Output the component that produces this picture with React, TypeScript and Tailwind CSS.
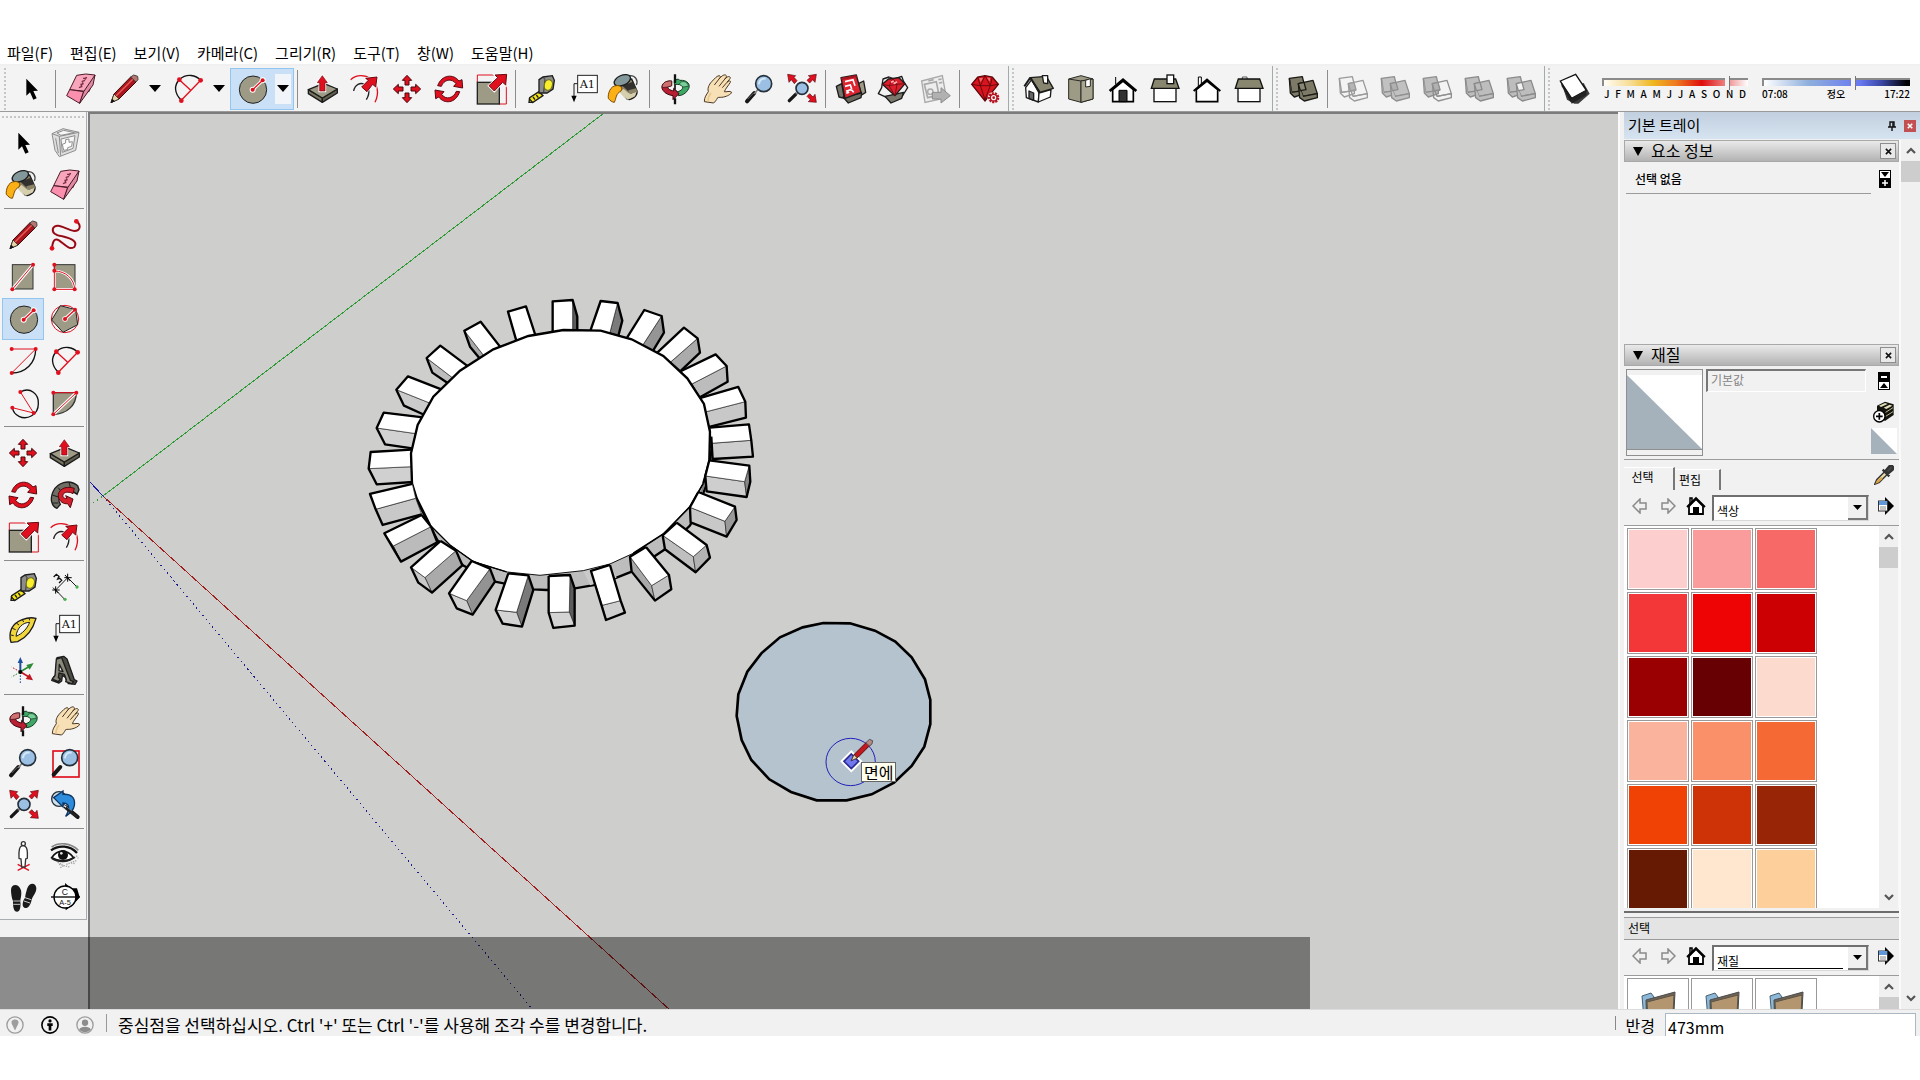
import type { ReactNode } from "react";

const RED = "#e0101f";
const OLIVE = "#9d9b86";
const INK = "#1c1c1c";

function Svg({ children, className = "size-8" }: { children: ReactNode; className?: string }) {
  return (
    <svg viewBox="0 0 96 96" className={`${className} shrink-0 overflow-visible`} fill="none" aria-hidden="true">
      {children}
    </svg>
  );
}

function Dots({ at, r = 6 }: { at: [number, number][]; r?: number }) {
  return (
    <>
      {at.map(([x, y]) => (
        <circle key={`${x}-${y}`} cx={x} cy={y} r={r} fill={RED} />
      ))}
    </>
  );
}

/* ---------- drawing tools ---------- */

const SelectIcon = () => (
  <Svg>
    <path d="M34 17V68L45 58L55 80L65 76L55 54L69 53Z" fill="#000" />
  </Svg>
);

const ComponentIcon = () => (
  <Svg>
    <g stroke="#8d8d8d" strokeWidth="3" strokeLinejoin="round">
      <path d="M9 20L42 5L90 16L80 70L31 89L18 70Z" fill="#dedede" />
      <path d="M9 20L31 28L35 86M31 28L90 16M20 34L28 78" fill="none" />
      <path d="M36 36L78 26L72 64L40 76Z" fill="#f6f6f6" />
      <path d="M40 52L50 48V38L60 36V46L70 44L68 58L56 62V68L44 70Z" fill="#fff" />
      <path d="M24 18L44 10L76 17L36 25Z" fill="#f7f7f7" />
    </g>
  </Svg>
);

const PaintIcon = () => (
  <Svg>
    <path d="M60 8C80 6 88 22 82 36" stroke="#444" strokeWidth="4" />
    <path d="M18 28L54 78C68 84 86 68 84 54L68 18Z" fill="#8b8268" stroke={INK} strokeWidth="4" />
    <path d="M40 66L84 52L78 70L56 80Z" fill="#d6cfae" />
    <path d="M40 38L72 26L84 54L66 62Z" fill="#33312d" />
    <path d="M58 52L82 46L84 56L62 64Z" fill="#8b8268" />
    <path d="M30 56L44 48L58 60L48 76Z" fill="#d6cfae" />
    <ellipse cx="40" cy="22" rx="26" ry="15" transform="rotate(-24 40 22)" fill="#83989b" stroke={INK} strokeWidth="4" />
    <path d="M22 38C4 38-4 62-2 76C2 82 10 88 16 88C22 76 20 62 36 54C42 44 34 36 22 38Z" fill="#fbb116" stroke="#7a4b00" strokeWidth="3" />
  </Svg>
);

const EraserIcon = () => (
  <Svg>
    <g stroke="#4a1a28" strokeWidth="3" strokeLinejoin="round">
      <path d="M35 7L62 3L90 6L72 56L14 50Z" fill="#f7a6bb" />
      <path d="M14 50L56 56L44 91L5 68Z" fill="#fb8fae" />
      <path d="M90 6L84 36L44 91L56 56Z" fill="#e08aa3" />
    </g>
    <path d="M42 44L52 40M46 34L56 32M50 26L60 22M54 16L66 14M48 40L54 28M60 20L64 12" stroke="#7d3048" strokeWidth="4" />
  </Svg>
);

const PencilIcon = () => (
  <Svg>
    <path d="M9 89L18 63L68 12L84 27L33 78Z" fill="#a8151d" stroke="#3a0a0c" strokeWidth="3" />
    <path d="M24 69L75 18" stroke="#ea5a58" strokeWidth="4" />
    <path d="M9 89L18 63L33 78Z" fill="#e4d5a8" stroke={INK} strokeWidth="2" />
    <path d="M8 90L12 77L21 85Z" fill="#111" />
    <path d="M68 12L77 6L89 10L90 20L84 27Z" fill="#b77770" stroke="#444" strokeWidth="3" />
  </Svg>
);

const FreehandIcon = () => (
  <Svg>
    <path d="M9 87C12 60 20 58 30 64C50 78 60 94 76 84C88 66 64 58 40 52C20 50 8 42 12 28C24 8 50 32 76 36C94 36 98 18 82 7" stroke="#b5121f" strokeWidth="6" />
    <path d="M9 87C12 60 20 58 30 64C50 78 60 94 76 84C88 66 64 58 40 52C20 50 8 42 12 28C24 8 50 32 76 36C94 36 98 18 82 7" stroke="#5a0a10" strokeWidth="2" />
    <Dots at={[[9, 88], [82, 7]]} r={7} />
  </Svg>
);

const RectIcon = () => (
  <Svg>
    <rect x="16" y="11" width="62" height="73" fill={OLIVE} stroke="#333" strokeWidth="3" />
    <path d="M16 85L78 11" stroke="#fff" strokeWidth="9" />
    <path d="M16 85L78 11" stroke={RED} strokeWidth="3" />
    <Dots at={[[16, 85], [78, 11]]} />
  </Svg>
);

const RotatedRectIcon = () => (
  <Svg>
    <rect x="16" y="11" width="62" height="73" fill={OLIVE} stroke="#333" strokeWidth="3" />
    <path d="M16 30C50 30 76 54 77 85H16Z" stroke="#fff" strokeWidth="8" />
    <path d="M16 11V85H77C76 54 50 30 16 30" stroke={RED} strokeWidth="3" />
    <Dots at={[[16, 11], [16, 29], [16, 85], [77, 85]]} />
  </Svg>
);

const CircleIcon = () => (
  <Svg>
    <circle cx="51" cy="50" r="41" fill={OLIVE} stroke="#222" strokeWidth="3" />
    <path d="M50 50L80 22" stroke="#fff" strokeWidth="10" />
    <circle cx="80" cy="22" r="9" fill="#fff" />
    <circle cx="50" cy="50" r="9" fill="#fff" />
    <path d="M50 50L80 22" stroke={RED} strokeWidth="4" />
    <Dots at={[[50, 50], [80, 22]]} />
  </Svg>
);

const PolygonIcon = () => (
  <Svg>
    <circle cx="48" cy="48" r="41" stroke={RED} strokeWidth="3" />
    <path d="M34 8L80 20L86 65L42 88L8 51Z" fill={OLIVE} stroke="#222" strokeWidth="3" />
    <path d="M48 48L78 20" stroke="#fff" strokeWidth="10" />
    <circle cx="48" cy="48" r="8" fill="#fff" />
    <path d="M48 48L78 20" stroke={RED} strokeWidth="4" />
    <Dots at={[[48, 48], [78, 20]]} />
  </Svg>
);

const ArcCenterIcon = () => (
  <Svg>
    <path d="M86 12C86 54 56 84 14 84" stroke="#111" strokeWidth="4" />
    <path d="M14 12H86L14 84" stroke={RED} strokeWidth="3" />
    <Dots at={[[14, 12], [86, 12], [14, 84]]} />
  </Svg>
);

const ArcTwoPointIcon = () => (
  <Svg>
    <path d="M28 82C6 60 6 36 22 20C44 0 72 6 86 22" stroke="#111" strokeWidth="4" />
    <path d="M28 82L86 22M22 20L56 52" stroke={RED} strokeWidth="4" />
    <Dots at={[[28, 83], [86, 22], [22, 20]]} r={7} />
  </Svg>
);

const ArcThreePointIcon = () => (
  <Svg>
    <path d="M40 15C70 -2 96 22 94 50C94 84 60 100 36 88C22 82 18 72 16 62" stroke="#111" strokeWidth="4" />
    <path d="M40 15L80 78L16 62" stroke={RED} strokeWidth="3" />
    <Dots at={[[40, 15], [80, 78], [16, 62]]} />
  </Svg>
);

const PieIcon = () => (
  <Svg>
    <path d="M13 17H82C82 56 52 82 13 82Z" fill={OLIVE} stroke="#333" strokeWidth="4" />
    <path d="M13 82L82 17" stroke="#fff" strokeWidth="9" />
    <path d="M13 17H82L13 82" stroke={RED} strokeWidth="3" />
    <Dots at={[[13, 17], [82, 17], [13, 82]]} />
  </Svg>
);

/* ---------- modify tools ---------- */

const MoveIcon = () => (
  <Svg>
    <path
      d="M48 7L62 22H54V36H42V22H34ZM48 89L34 74H42V60H54V74H62ZM7 48L22 34V42H36V54H22V62ZM89 48L74 62V54H60V42H74V34Z"
      fill={RED}
      stroke="#4d070c"
      strokeWidth="3"
    />
  </Svg>
);

const PushPullIcon = () => (
  <Svg>
    <g stroke={INK} strokeWidth="4" strokeLinejoin="round">
      <path d="M4 50V62L46 88V75Z" fill="#77755f" />
      <path d="M91 48V60L46 88V75Z" fill="#5f5d4c" />
      <path d="M4 50L50 31L91 48L46 75Z" fill={OLIVE} />
    </g>
    <path d="M46 8L61 29H54V54H38V29H31Z" fill={RED} stroke="#fff" strokeWidth="7" />
    <path d="M46 8L61 29H54V54H38V29H31Z" fill={RED} stroke="#7a0a10" strokeWidth="2" />
  </Svg>
);

const RotateIcon = () => (
  <Svg>
    <g fill={RED} stroke="#5a0810" strokeWidth="3" strokeLinejoin="round">
      <path d="M14 38C26 4 62 2 78 24L87 20L89 45L62 40L69 32C56 14 32 20 25 40Z" />
      <path d="M80 56C68 92 34 94 17 72L8 77L6 51L33 56L26 64C38 82 62 76 70 55Z" />
    </g>
  </Svg>
);

const FollowMeIcon = () => (
  <Svg>
    <path d="M86 20C60 -2 24 12 12 38C2 60 8 82 24 88L34 76C26 64 28 48 42 40C56 32 72 36 84 46L90 32Z" fill="#6f6f66" stroke={INK} strokeWidth="4" />
    <path d="M28 26L38 40M60 10L66 32M10 48L28 54M12 72L28 72" stroke={INK} strokeWidth="3" />
    <path d="M76 28C48 18 24 34 28 54C32 68 44 76 56 74L64 86L72 60L50 50L54 58C44 60 38 52 44 44C50 38 62 38 72 44Z" fill="#d3202c" stroke="#5a0810" strokeWidth="3" />
  </Svg>
);

const ScaleIcon = () => (
  <Svg>
    <path d="M7 28V6H94V93H72" stroke={RED} strokeWidth="3" />
    <rect x="7" y="28" width="66" height="65" fill={OLIVE} stroke="#222" strokeWidth="4" />
    <path d="M95 4L92 36L83 28L58 54L42 38L68 14L60 6Z" fill={RED} stroke="#fff" strokeWidth="7" />
    <path d="M95 4L92 36L83 28L58 54L42 38L68 14L60 6Z" fill={RED} stroke="#6a0910" strokeWidth="3" />
  </Svg>
);

const OffsetIcon = () => (
  <Svg>
    <path d="M5 20C40 -12 108 24 78 88" stroke={RED} strokeWidth="4" />
    <path d="M14 54C22 12 80 34 52 80" stroke="#222" strokeWidth="4" />
    <path d="M84 12L80 42L71 34L54 56L38 42L58 22L50 16Z" fill={RED} stroke="#fff" strokeWidth="6" />
    <path d="M84 12L80 42L71 34L54 56L38 42L58 22L50 16Z" fill={RED} stroke="#6a0910" strokeWidth="3" />
  </Svg>
);

/* ---------- measuring tools ---------- */

const TapeIcon = () => (
  <Svg>
    <path d="M42 56L14 74L12 88L24 88L54 68Z" fill="#f5e51b" stroke={INK} strokeWidth="4" />
    <path d="M12 76L24 90M24 72L30 80M34 66L40 74" stroke={INK} strokeWidth="4" />
    <path d="M42 20L54 12L82 8L88 22L84 48L66 60L42 60Z" fill="#8c8c8a" stroke={INK} strokeWidth="4" />
    <path d="M54 12L60 20L56 58" stroke="#333" strokeWidth="3" />
    <ellipse cx="70" cy="36" rx="12" ry="16" transform="rotate(14 70 36)" fill="#f8f02c" stroke="#6f6b1b" strokeWidth="3" />
  </Svg>
);

const DimensionIcon = () => (
  <Svg>
    <path d="M20 57L56 20M20 57L46 84M56 20L84 48" stroke={INK} strokeWidth="3" />
    <path d="M12 50L28 66M20 46V68M10 57H32M48 12L64 30M56 8V32M46 20H68" stroke="#000" strokeWidth="3" />
    <path d="M14 18L22 10L30 16L26 24L32 22L38 28L30 36" stroke="#111" strokeWidth="4" />
    <circle cx="48" cy="85" r="5" fill="#4db154" />
    <circle cx="84" cy="48" r="5" fill="#4db154" />
  </Svg>
);

const ProtractorIcon = () => (
  <Svg>
    <path d="M87 16C62 10 26 22 14 46C8 60 8 76 12 88L32 86C58 74 78 48 87 16Z" fill="#f2d73c" stroke={INK} strokeWidth="4" strokeLinejoin="round" />
    <path d="M68 28C48 28 30 44 27 70C46 62 60 48 68 28Z" fill="#f3f3f3" stroke={INK} strokeWidth="3" />
    <path d="M12 66L20 68M16 46L26 50M28 30L36 36M46 20L50 27M66 15L68 22" stroke={INK} strokeWidth="3" />
  </Svg>
);

const TextIcon = () => (
  <Svg>
    <path d="M32 32H21V72" stroke={INK} strokeWidth="3" />
    <path d="M13 68H29L21 88Z" fill="#000" />
    <rect x="32" y="7" width="59" height="52" fill="#fff" stroke="#222" strokeWidth="3" />
    <text x="61" y="45" textAnchor="middle" fontFamily="DejaVu Serif, serif" fontSize="34" fill="#111">
      A1
    </text>
  </Svg>
);

const AxesIcon = () => (
  <Svg>
    <path d="M40 52V20" stroke="#1f4fa0" strokeWidth="6" />
    <path d="M32 24L40 6L48 24Z" fill="#1f4fa0" />
    <path d="M40 50L68 34" stroke="#2c8c37" strokeWidth="5" />
    <path d="M58 30L80 24L68 44Z" fill="#2c8c37" />
    <path d="M40 50L66 66" stroke="#c3151f" strokeWidth="5" />
    <path d="M68 56L78 76L56 72Z" fill="#c3151f" />
    <path d="M40 52V84" stroke="#1f4fa0" strokeWidth="3" strokeDasharray="5 4" />
    <path d="M38 52L14 66" stroke="#2c8c37" strokeWidth="3" strokeDasharray="5 4" />
    <path d="M38 50L14 36" stroke="#c3151f" strokeWidth="3" strokeDasharray="5 4" />
    <circle cx="40" cy="51" r="6" fill="#000" />
  </Svg>
);

const Text3dIcon = () => (
  <Svg>
    <g stroke={INK} strokeWidth="4" strokeLinejoin="round">
      <path d="M24 8L44 4L54 12L76 74L84 78L78 88L58 86L48 66L40 62L38 78L30 84L8 76L14 66L20 60Z" fill="#4e4d45" />
      <path d="M22 12L38 8L64 76L74 80L68 86L50 80L52 74L46 58L30 54L28 68L34 72L28 80L10 72L18 62Z" fill="#8b897a" />
      <path d="M31 28L42 50L30 47Z" fill="#f3f3f3" />
    </g>
  </Svg>
);

/* ---------- camera tools ---------- */

const OrbitIcon = () => (
  <Svg>
    <path d="M62 22C86 20 98 36 86 52C80 62 68 68 58 68L58 60L46 68V50L56 56C66 54 74 46 70 40C66 34 58 34 46 34V22L58 18Z" fill="#3fa765" stroke="#123d20" strokeWidth="3" />
    <path d="M62 34C60 24 86 20 88 40L72 42Z" fill="#79cf99" stroke="#123d20" strokeWidth="2" />
    <path d="M38 24C16 22 2 38 12 52C18 62 30 66 42 68V80L60 62L44 46V54C32 52 26 46 26 42L38 38Z" fill="#b81f33" stroke="#3d0810" strokeWidth="3" />
    <path d="M38 24C16 22 8 34 10 44L26 42L38 38Z" fill="#cd7170" stroke="#3d0810" strokeWidth="2" />
    <path d="M48 4V30M48 76V94" stroke="#111" strokeWidth="7" />
    <path d="M48 34V50" stroke="#111" strokeWidth="5" />
  </Svg>
);

const PanIcon = () => (
  <Svg>
    <path
      d="M10 86C10 72 16 66 22 56C18 42 28 30 34 24C42 16 46 10 54 8C60 8 58 14 54 18C62 8 72 2 76 8C78 12 72 16 70 20C78 10 86 8 88 14C88 18 82 22 78 28C84 22 90 22 88 28C82 38 74 46 70 56C76 58 86 52 92 58C90 64 78 70 68 72C60 74 54 72 50 74C46 82 42 86 38 90Z"
      fill="#f8e0b6"
      stroke="#4a3823"
      strokeWidth="3"
      strokeLinejoin="round"
    />
    <path d="M54 18L40 36M70 20L54 40M78 28L64 44" stroke="#4a3823" strokeWidth="3" />
    <path d="M30 60C24 68 20 78 22 86" stroke="#e7c78d" strokeWidth="5" />
  </Svg>
);

const ZoomIcon = () => (
  <Svg>
    <path d="M12 85L34 60" stroke="#161616" strokeWidth="12" strokeLinecap="round" />
    <path d="M14 78L32 60" stroke="#6d6d6d" strokeWidth="3" />
    <path d="M34 62L44 50" stroke="#888" strokeWidth="5" />
    <circle cx="62" cy="32" r="24" fill="#9cc0e4" stroke="#26303a" strokeWidth="5" />
    <path d="M48 34C48 20 58 16 68 17" stroke="#d4e7f7" strokeWidth="6" />
  </Svg>
);

const ZoomWindowIcon = () => (
  <Svg>
    <rect x="12" y="12" width="78" height="78" fill="#f3f3f3" stroke={RED} strokeWidth="5" />
    <path d="M14 83L34 60" stroke="#161616" strokeWidth="12" strokeLinecap="round" />
    <circle cx="62" cy="32" r="24" fill="#9cc0e4" stroke="#26303a" strokeWidth="5" />
    <path d="M48 34C48 20 58 16 68 17" stroke="#d4e7f7" strokeWidth="6" />
  </Svg>
);

const ZoomExtentsIcon = () => (
  <Svg>
    <g fill={RED} stroke="#5a0810" strokeWidth="2">
      <path d="M8 4L32 8L27 13L36 23L28 32L19 20L12 28Z" />
      <path d="M94 4L90 28L83 20L74 30L66 22L76 13L70 8Z" />
      <path d="M94 88L70 86L76 80L66 70L74 62L84 72L90 64Z" />
    </g>
    <path d="M13 83L32 64" stroke="#161616" strokeWidth="10" strokeLinecap="round" />
    <path d="M32 64L42 56" stroke="#777" strokeWidth="4" />
    <circle cx="51" cy="46" r="18" fill="#9cc0e4" stroke="#26303a" strokeWidth="5" />
  </Svg>
);

const PreviousIcon = () => (
  <Svg>
    <circle cx="30" cy="30" r="22" fill="#cfe0ee" stroke="#26303a" strokeWidth="4" />
    <path d="M50 54L86 84" stroke="#161616" strokeWidth="12" strokeLinecap="round" />
    <path d="M14 26L42 6V16C66 14 80 26 76 50C74 60 66 72 50 82C58 68 60 56 58 50C54 44 50 42 42 42V54Z" fill="#2e8cdc" stroke="#0d3763" strokeWidth="4" />
    <path d="M46 50L68 68" stroke="#fff" strokeWidth="4" />
    <path d="M50 56L84 84" stroke="#222" strokeWidth="8" />
  </Svg>
);

const PositionCameraIcon = () => (
  <Svg>
    <path d="M32 94L68 76M66 94L32 76" stroke={RED} strokeWidth="4" />
    <path d="M48 20C62 20 62 40 61 58L56 60L54 84H44L42 60L36 58C35 38 36 20 48 20Z" fill="#fff" stroke="#333" strokeWidth="4" />
    <circle cx="49" cy="14" r="6" fill="#fff" stroke="#333" strokeWidth="4" />
  </Svg>
);

const LookAroundIcon = () => (
  <Svg>
    <path d="M8 24C30 8 66 12 88 34" stroke="#888" strokeWidth="5" />
    <path d="M6 34C30 16 64 20 84 42" stroke="#111" strokeWidth="7" />
    <path d="M8 56C26 30 54 30 74 56C54 68 30 68 8 56Z" fill="#fff" stroke="#111" strokeWidth="5" />
    <circle cx="42" cy="48" r="15" fill="#0d0d0d" />
    <circle cx="37" cy="43" r="4" fill="#ddd" />
    <path d="M8 58C30 72 60 70 78 54" stroke="#222" strokeWidth="5" />
    <path d="M30 76L62 84M52 76L84 64M34 86L44 80M82 50L88 58M26 70L40 76M66 72L80 74" stroke="#a5a5a5" strokeWidth="4" strokeDasharray="4 3" />
  </Svg>
);

const WalkIcon = () => (
  <Svg>
    <g fill="#1a1a1a">
      <path d="M12 26C12 8 36 6 42 28C45 42 40 54 40 60L18 60C14 50 12 36 12 26Z" />
      <path d="M18 60H40C42 82 38 92 30 92C20 92 18 80 18 60Z" />
      <path d="M60 24C66 2 88 4 88 22C88 36 78 44 74 56L54 50C56 38 58 32 60 24Z" />
      <path d="M54 50L74 56C70 76 60 84 52 80C44 76 46 62 54 50Z" />
    </g>
    <path d="M19 60H39M19 70H39M54 50L72 56M51 60L69 66" stroke="#c5c5c5" strokeWidth="3" />
  </Svg>
);

const SectionIcon = () => (
  <Svg>
    <path d="M48 6L66 22H84L92 48L72 72L50 88Z" fill="#000" />
    <circle cx="48" cy="48" r="33" fill="#fff" stroke="#000" strokeWidth="4" />
    <path d="M6 48H92" stroke="#000" strokeWidth="4" />
    <path d="M80 34L93 48L80 62Z" fill="#000" />
    <text x="48" y="42" textAnchor="middle" fontFamily="Liberation Sans, sans-serif" fontSize="26" fill="#111">
      C
    </text>
    <text x="48" y="71" textAnchor="middle" fontFamily="Liberation Sans, sans-serif" fontSize="22" fill="#111">
      A-5
    </text>
  </Svg>
);

/* ---------- warehouse ---------- */

const WarehouseIcon = () => (
  <Svg>
    <g stroke={INK} strokeWidth="4" strokeLinejoin="round">
      <path d="M4 40L20 32L28 76L12 72Z" fill="#77756a" />
      <path d="M70 32L86 24L92 58L80 66Z" fill="#9d9b86" />
      <path d="M24 72L80 60L78 74L40 90Z" fill="#6b695d" />
      <path d="M18 14L64 6L78 58L30 76Z" fill="#dd2430" />
    </g>
    <path d="M30 26L54 20L60 38M30 40L46 36L50 48M36 62C36 50 50 46 56 58M34 52L42 60" stroke="#fff" strokeWidth="5" />
    <path d="M18 14L64 6L66 13L20 21Z" fill="#a5151e" />
  </Svg>
);

const ExtensionIcon = () => (
  <Svg>
    <g stroke={INK} strokeWidth="4" strokeLinejoin="round">
      <path d="M18 18L36 12L52 18L74 10L80 26L92 44L78 66L30 74L4 62L14 44Z" fill="#f2f2f2" />
      <path d="M24 70L80 58L74 76L42 90Z" fill="#7a786c" />
      <path d="M16 34L34 18L66 14L84 32L54 68Z" fill="#dd1f2c" />
    </g>
    <path d="M16 34L36 38L60 34L84 32M36 38L54 68L60 34L48 17Z" stroke="#7c0e16" strokeWidth="3" />
    <path d="M50 32L60 26M42 28L50 24" stroke="#ffb3b3" strokeWidth="5" />
  </Svg>
);

const LayoutSendIcon = () => (
  <Svg>
    <path d="M8 24L70 8L82 74L18 88Z" fill="#ededed" stroke="#a9a9a9" strokeWidth="4" />
    <path d="M16 34L52 26L60 66L26 74ZM58 20L68 18M60 30L70 28M28 24L44 20" stroke="#a9a9a9" strokeWidth="5" />
    <circle cx="34" cy="56" r="8" stroke="#a9a9a9" strokeWidth="4" />
    <path d="M40 58H66V44L94 68L66 90V78H40Z" fill="#b1b1b1" stroke="#8d8d8d" strokeWidth="3" />
  </Svg>
);

const RubyIcon = () => (
  <Svg>
    <path d="M8 34L26 12L48 8L70 12L88 34L48 84Z" fill="#d8151f" stroke="#5b0509" strokeWidth="4" />
    <path d="M8 34L34 38L64 38L88 34M26 12L34 38L48 80L64 38L70 12M34 38L48 8L64 38" stroke="#6d070c" strokeWidth="3" />
    <path d="M30 15H42L35 28ZM54 14H64L62 26Z" fill="#f36a68" />
    <circle cx="74" cy="74" r="18" fill="#f3f3f3" />
    <circle cx="74" cy="74" r="13" stroke="#b5121f" strokeWidth="8" strokeDasharray="6 3" />
    <circle cx="74" cy="74" r="10" stroke="#b5121f" strokeWidth="4" />
    <circle cx="74" cy="74" r="4" fill="#b5121f" />
  </Svg>
);

/* ---------- standard views ---------- */

const IsoIcon = () => (
  <Svg>
    <g stroke={INK} strokeWidth="4" strokeLinejoin="round">
      <path d="M8 44L26 20L48 60L46 87L10 74Z" fill="#fff" />
      <path d="M48 60L84 50L82 72L46 87Z" fill="#fff" />
      <path d="M18 54L32 60V82L18 76Z" fill="#666" />
      <path d="M22 14L70 10L91 46L50 58Z" fill="#88866f" />
      <path d="M58 8H74V32L62 30Z" fill="#fff" />
      <path d="M22 14L4 40M22 14L50 58" strokeWidth="6" />
    </g>
  </Svg>
);

const TopIcon = () => (
  <Svg>
    <g stroke="#2a2a24" strokeWidth="3" strokeLinejoin="round">
      <path d="M11 18L48 8L84 18V78L48 88L11 78Z" fill="#9d9b86" />
      <path d="M11 18L48 24V88M48 24L84 18" />
      <path d="M48 24L84 18V78L48 88Z" fill="#a8a691" />
      <path d="M62 22L76 17V40L62 42Z" fill="#fff" />
    </g>
  </Svg>
);

const FrontIcon = () => (
  <Svg>
    <path d="M26 34V12" stroke="#000" strokeWidth="3" />
    <path d="M17 50L48 24L79 50V86H17Z" fill="#fff" stroke="#000" strokeWidth="5" />
    <path d="M8 54L48 20L88 54" stroke="#000" strokeWidth="8" />
    <path d="M36 86V52H60V86Z" fill="#333" stroke="#000" strokeWidth="3" />
  </Svg>
);

const RightIcon = () => (
  <Svg>
    <rect x="15" y="44" width="66" height="42" fill="#fff" stroke="#111" strokeWidth="4" />
    <path d="M16 18H80L90 46H7Z" fill="#88866f" stroke="#111" strokeWidth="4" />
    <rect x="54" y="6" width="20" height="26" fill="#fff" stroke="#111" strokeWidth="4" />
  </Svg>
);

const BackIcon = () => (
  <Svg>
    <path d="M22 42V12H31V34" fill="#fff" stroke="#000" strokeWidth="3" />
    <path d="M16 50L48 24L80 50V86H16Z" fill="#fff" stroke="#000" strokeWidth="5" />
    <path d="M8 54L48 20L88 54" stroke="#000" strokeWidth="6" />
  </Svg>
);

const LeftIcon = () => (
  <Svg>
    <path d="M28 18V12H42V18" fill="#fff" stroke="#555" strokeWidth="3" />
    <rect x="15" y="44" width="66" height="42" fill="#fff" stroke="#111" strokeWidth="4" />
    <path d="M16 18H80L90 46H7Z" fill="#88866f" stroke="#111" strokeWidth="4" />
  </Svg>
);

/* ---------- solid tools ---------- */

type SolidProps = { a: string; b: string; mid: string; line: string };

const SolidIcon = ({ a, b, mid, line }: SolidProps) => (
  <Svg>
    <g stroke={line} strokeWidth="4" strokeLinejoin="round">
      <path d="M7 16L46 11L56 52L14 58Z" fill={a} />
      <path d="M14 58L52 52V62L22 72L10 60L7 16" fill={a} />
      <path d="M34 32L78 22L91 62L48 70Z" fill={b} />
      <path d="M48 70L91 62V74L52 84L38 74L34 32" fill={b} />
      <path d="M34 32L51 28L57 50L40 53Z" fill={mid} />
    </g>
  </Svg>
);

const ShadowIcon = () => (
  <Svg>
    <path d="M14 50L24 80L46 92L58 92L92 62L74 30Z" fill="#3b3b3b" />
    <path d="M4 24L50 4L82 52L38 76Z" fill="#fff" stroke="#111" strokeWidth="4" />
    <path d="M4 24L38 76V92L8 40Z" fill="#1c1c1c" />
    <path d="M38 76L82 52V66L38 92Z" fill="#222" />
  </Svg>
);

/* ---------- shared controls ---------- */

function Tool({ label, children, active = false }: { label: string; children: ReactNode; active?: boolean }) {
  return (
    <button
      type="button"
      aria-label={label}
      className={`flex h-[42px] w-[42px] shrink-0 items-center justify-center ${
        active ? "border border-[#93c6ee] bg-[#c9e0f6]" : ""
      }`}
    >
      {children}
    </button>
  );
}

function SplitTool({ label, children, active = false }: { label: string; children: ReactNode; active?: boolean }) {
  return (
    <div
      className={`flex h-[42px] w-16 shrink-0 items-center border pl-[5px] ${
        active ? "border-[#93c6ee] bg-[#c9e0f6]" : "border-transparent"
      }`}
    >
      <button type="button" aria-label={label}>
        {children}
      </button>
      <button
        type="button"
        aria-label={`${label} 옵션`}
        className={`ml-[7px] flex h-[30px] w-4 items-center justify-center ${active ? "bg-[#f1f5f9]" : ""}`}
      >
        <svg viewBox="0 0 12 7" className="h-[7px] w-3" aria-hidden="true">
          <path d="M0 0H12L6 7Z" fill="#000" />
        </svg>
      </button>
    </div>
  );
}

const Separator = () => <div className="mr-1 ml-[3px] h-[38px] w-px shrink-0 bg-[#8c8c8c]" />;

const Grip = () => <div className="mr-1 h-[42px] w-0.5 shrink-0 border-l-2 border-dotted border-[#c6c6c6]" />;

const BandEnd = () => <div className="mr-[3px] ml-0.5 h-full w-px shrink-0 bg-[#a3a9ad]" />;

const menus = ["파일(F)", "편집(E)", "보기(V)", "카메라(C)", "그리기(R)", "도구(T)", "창(W)", "도움말(H)"];
const months = ["J", "F", "M", "A", "M", "J", "J", "A", "S", "O", "N", "D"];

const sliderClass =
  "block h-2 w-full appearance-none border-t-2 border-l-2 border-[#8a8a8a] [&::-webkit-slider-thumb]:h-3.5 [&::-webkit-slider-thumb]:w-[5px] [&::-webkit-slider-thumb]:appearance-none [&::-webkit-slider-thumb]:border-r [&::-webkit-slider-thumb]:border-[#777] [&::-webkit-slider-thumb]:bg-[#f3f3f3]";

function TopToolbar() {
  return (
    <div className="flex h-12 shrink-0 items-center overflow-hidden border-t-2 border-b border-[#f0f0f0] border-b-[#9a9a9a] bg-[#f3f3f3] pl-1">
      <Grip />
      <Tool label="선택"><SelectIcon /></Tool>
      <Separator />
      <Tool label="지우개"><EraserIcon /></Tool>
      <SplitTool label="선"><PencilIcon /></SplitTool>
      <SplitTool label="호"><ArcTwoPointIcon /></SplitTool>
      <SplitTool label="원" active><CircleIcon /></SplitTool>
      <Separator />
      <Tool label="밀기/끌기"><PushPullIcon /></Tool>
      <Tool label="오프셋"><OffsetIcon /></Tool>
      <Tool label="이동"><MoveIcon /></Tool>
      <Tool label="회전"><RotateIcon /></Tool>
      <Tool label="배율"><ScaleIcon /></Tool>
      <Separator />
      <Tool label="줄자"><TapeIcon /></Tool>
      <Tool label="텍스트"><TextIcon /></Tool>
      <Tool label="페인트통"><PaintIcon /></Tool>
      <Separator />
      <Tool label="궤도"><OrbitIcon /></Tool>
      <Tool label="이동 보기"><PanIcon /></Tool>
      <Tool label="확대/축소"><ZoomIcon /></Tool>
      <Tool label="범위 확대"><ZoomExtentsIcon /></Tool>
      <Separator />
      <Tool label="3D 웨어하우스"><WarehouseIcon /></Tool>
      <Tool label="확장 프로그램 웨어하우스"><ExtensionIcon /></Tool>
      <Tool label="레이아웃으로 보내기"><LayoutSendIcon /></Tool>
      <Separator />
      <Tool label="확장 프로그램 관리자"><RubyIcon /></Tool>
      <BandEnd />
      <Grip />
      <Tool label="등각투영"><IsoIcon /></Tool>
      <Tool label="상단"><TopIcon /></Tool>
      <Tool label="전면"><FrontIcon /></Tool>
      <Tool label="오른쪽"><RightIcon /></Tool>
      <Tool label="뒤쪽"><BackIcon /></Tool>
      <Tool label="왼쪽"><LeftIcon /></Tool>
      <BandEnd />
      <Grip />
      <Tool label="외부 셸"><SolidIcon a="#7d7b68" b="#7d7b68" mid="#8a8874" line="#1b1b16" /></Tool>
      <Separator />
      <Tool label="교차"><SolidIcon a="none" b="none" mid="#b5b5b5" line="#9a9a9a" /></Tool>
      <Tool label="합치기"><SolidIcon a="#c1c1c1" b="#c1c1c1" mid="#b1b1b1" line="#8f8f8f" /></Tool>
      <Tool label="빼기"><SolidIcon a="#bdbdbd" b="none" mid="#b1b1b1" line="#8f8f8f" /></Tool>
      <Tool label="자르기"><SolidIcon a="#bdbdbd" b="#bdbdbd" mid="#bdbdbd" line="#8a8a8a" /></Tool>
      <Tool label="나누기"><SolidIcon a="#bdbdbd" b="#bdbdbd" mid="#f3f3f3" line="#8a8a8a" /></Tool>
      <BandEnd />
      <Grip />
      <Tool label="그림자"><ShadowIcon /></Tool>
      <div className="ml-1.5 w-[146px] shrink-0">
        <input
          type="range"
          aria-label="날짜"
          defaultValue={87}
          className={`${sliderClass} bg-[linear-gradient(90deg,#fffdf5,#f7dd95_18%,#efb71f_34%,#ee7a20_50%,#df0d0d_68%,#ee8f8f_86%,#fff)]`}
        />
        <div className="mt-0.5 flex justify-between px-0.5 text-[10px] leading-3 font-medium">
          {months.map((m, i) => (
            <span key={i}>{m}</span>
          ))}
        </div>
      </div>
      <div className="ml-3.5 w-[148px] shrink-0">
        <input
          type="range"
          aria-label="시간"
          defaultValue={62}
          className={`${sliderClass} bg-[linear-gradient(90deg,#fff,#8fb0dc_30%,#6878f0_66%,#3b48a8_80%,#000_98%)]`}
        />
        <div className="mt-0.5 flex justify-between text-[10px] leading-3 font-medium">
          <span>07:08</span>
          <span>정오</span>
          <span>17:22</span>
        </div>
      </div>
    </div>
  );
}

const ToolRow = ({ children }: { children: ReactNode }) => <div className="flex">{children}</div>;
const RowLine = () => <div className="mx-0.5 mt-0.5 mb-[5px] h-px bg-[#8c8c8c]" />;

function SideToolbar() {
  return (
    <aside className="w-[88px] shrink-0 bg-[#f1f1f1]">
      <div className="mr-px border-r border-b border-[#a9adb0] bg-[#f4f4f4] pt-1 pb-px pl-0.5">
        <div className="mr-0.5 mb-1 h-0.5 border-t-2 border-dotted border-[#c6c6c6]" />
        <ToolRow>
          <Tool label="선택"><SelectIcon /></Tool>
          <Tool label="구성요소 만들기"><ComponentIcon /></Tool>
        </ToolRow>
        <ToolRow>
          <Tool label="페인트통"><PaintIcon /></Tool>
          <Tool label="지우개"><EraserIcon /></Tool>
        </ToolRow>
        <RowLine />
        <ToolRow>
          <Tool label="선"><PencilIcon /></Tool>
          <Tool label="자유선"><FreehandIcon /></Tool>
        </ToolRow>
        <ToolRow>
          <Tool label="직사각형"><RectIcon /></Tool>
          <Tool label="회전된 직사각형"><RotatedRectIcon /></Tool>
        </ToolRow>
        <ToolRow>
          <Tool label="원" active><CircleIcon /></Tool>
          <Tool label="다각형"><PolygonIcon /></Tool>
        </ToolRow>
        <ToolRow>
          <Tool label="호"><ArcCenterIcon /></Tool>
          <Tool label="2점 호"><ArcTwoPointIcon /></Tool>
        </ToolRow>
        <ToolRow>
          <Tool label="3점 호"><ArcThreePointIcon /></Tool>
          <Tool label="파이"><PieIcon /></Tool>
        </ToolRow>
        <RowLine />
        <ToolRow>
          <Tool label="이동"><MoveIcon /></Tool>
          <Tool label="밀기/끌기"><PushPullIcon /></Tool>
        </ToolRow>
        <ToolRow>
          <Tool label="회전"><RotateIcon /></Tool>
          <Tool label="따라가기"><FollowMeIcon /></Tool>
        </ToolRow>
        <ToolRow>
          <Tool label="배율"><ScaleIcon /></Tool>
          <Tool label="오프셋"><OffsetIcon /></Tool>
        </ToolRow>
        <RowLine />
        <ToolRow>
          <Tool label="줄자"><TapeIcon /></Tool>
          <Tool label="치수"><DimensionIcon /></Tool>
        </ToolRow>
        <ToolRow>
          <Tool label="각도기"><ProtractorIcon /></Tool>
          <Tool label="텍스트"><TextIcon /></Tool>
        </ToolRow>
        <ToolRow>
          <Tool label="축"><AxesIcon /></Tool>
          <Tool label="3D 텍스트"><Text3dIcon /></Tool>
        </ToolRow>
        <RowLine />
        <ToolRow>
          <Tool label="궤도"><OrbitIcon /></Tool>
          <Tool label="이동 보기"><PanIcon /></Tool>
        </ToolRow>
        <ToolRow>
          <Tool label="확대/축소"><ZoomIcon /></Tool>
          <Tool label="창 확대"><ZoomWindowIcon /></Tool>
        </ToolRow>
        <ToolRow>
          <Tool label="범위 확대"><ZoomExtentsIcon /></Tool>
          <Tool label="이전"><PreviousIcon /></Tool>
        </ToolRow>
        <RowLine />
        <ToolRow>
          <Tool label="카메라 배치"><PositionCameraIcon /></Tool>
          <Tool label="둘러보기"><LookAroundIcon /></Tool>
        </ToolRow>
        <ToolRow>
          <Tool label="걷기"><WalkIcon /></Tool>
          <Tool label="단면"><SectionIcon /></Tool>
        </ToolRow>
      </div>
    </aside>
  );
}

/* ---------- model ---------- */

type Block = { top: string; side?: string; shade?: string; end?: string; endShade?: string; outline: string };

const backBlocks: Block[] = [
  { top: "608,64 668,60 668,156 608,160", side: "668,60 682,110 682,156 668,156", shade: "#5c5c5c", outline: "608,160 608,64 668,60 682,110 682,156" },
  { top: "752,63 803,69 778,165 720,156", side: "803,69 817,122 804,172 778,165", shade: "#7b7b7b", outline: "720,156 752,63 803,69 817,122 804,172" },
  { top: "883,90 935,108 878,196 828,178", side: "935,108 942,158 908,214 878,196", shade: "#959595", outline: "828,178 883,90 935,108 942,158 908,214" },
  { top: "1002,143 1043,175 962,246 922,218", side: "1043,175 1050,218 993,272 962,246", shade: "#ababab", outline: "922,218 1002,143 1043,175 1050,218 993,272" },
  { top: "1097,223 1130,258 1026,312 992,274", side: "1130,258 1133,305 1050,352 1026,312", shade: "#bcbcbc", outline: "992,274 1097,223 1130,258 1133,305 1050,352" },
  { top: "1165,321 1186,365 1066,396 1052,354", side: "1186,365 1188,413 1078,441 1066,396", shade: "#c8c8c8", outline: "1052,354 1165,321 1186,365 1188,413 1078,441" },
  { top: "1197,433 1204,481 1084,490 1080,443", side: "1204,481 1209,530 1088,537 1084,490", shade: "#cecece", outline: "1080,443 1197,433 1204,481 1209,530 1088,537 1084,470" },
  { top: "62,516 185,509 187,560 56,566", side: "187,560 190,606 80,613 56,566", shade: "#d0d0d0", outline: "185,509 62,516 56,566 80,613 190,606" },
  { top: "101,398 219,412 198,461 80,444", side: "198,461 187,505 105,493 80,444", shade: "#d2d2d2", outline: "219,412 101,398 80,444 105,493 187,505" },
  { top: "174,289 274,328 244,371 139,329", side: "244,371 224,405 162,377 139,329", shade: "#cbcbcb", outline: "274,328 174,289 139,329 162,377 224,405" },
  { top: "271,197 354,259 311,296 230,234", side: "311,296 294,310 247,278 230,234", shade: "#bdbdbd", outline: "354,259 271,197 230,234 247,278 294,310" },
  { top: "392,125 450,200 404,230 343,152", side: "404,230 386,234 360,200 343,152", shade: "#a8a8a8", outline: "450,200 392,125 343,152 360,200 388,234" },
  { top: "528,79 556,165 499,184 474,95", outline: "499,182 474,95 528,79 556,165" },
];

const frontBlocks: Block[] = [
  { top: "1078,541 1198,557 1184,605 1066,588", side: "1066,588 1184,605 1190,651 1070,634", shade: "#cecece", end: "1198,557 1201,605 1190,651 1184,605", endShade: "#858585", outline: "1078,541 1198,557 1201,605 1190,651 1070,634 1066,588 1078,541" },
  { top: "1045,636 1155,680 1125,724 1020,682", side: "1020,682 1125,724 1130,770 1022,727", shade: "#c8c8c8", end: "1155,680 1160,720 1130,770 1125,724", endShade: "#999", outline: "1045,636 1155,680 1160,720 1130,770 1022,727 1020,682 1045,636" },
  { top: "980,728 1070,795 1030,830 938,766", side: "938,766 1030,830 1037,877 945,808", shade: "#bfbfbf", end: "1070,795 1080,833 1037,877 1030,830", endShade: "#b2b2b2", outline: "980,728 1070,795 1080,833 1037,877 945,808 938,766 980,728" },
  { top: "888,801 957,885 905,917 840,830", side: "840,830 905,917 915,962 845,875", shade: "#a9a9a9", end: "957,885 964,928 915,962 905,917", endShade: "#c3c3c3", outline: "888,801 957,885 964,928 915,962 845,875 840,830 888,801" },
  { top: "780,855 812,962 757,976 723,873", end: "757,976 812,962 825,998 768,1020", endShade: "#cfcfcf", outline: "780,855 812,962 825,998 768,1020 723,873 780,855" },
  { top: "596,888 660,885 658,996 596,998", side: "660,885 674,925 674,1037 658,996", shade: "#5c5c5c", end: "596,998 658,996 674,1037 610,1044", endShade: "#d4d4d4", outline: "596,888 660,885 674,925 674,1037 610,1044 596,998 596,888" },
  { top: "475,880 535,886 500,997 437,990", side: "535,886 550,930 516,1040 500,997", shade: "#7a7a7a", end: "437,990 500,997 516,1040 458,1031", endShade: "#d4d4d4", outline: "475,880 535,886 550,930 516,1040 458,1031 437,990 475,880" },
  { top: "365,843 420,866 350,962 297,940", side: "420,866 435,905 368,1004 350,962", shade: "#939393", end: "297,940 350,962 368,1004 320,985", endShade: "#d0d0d0", outline: "365,843 420,866 435,905 368,1004 320,985 297,940 365,843" },
  { top: "272,783 318,812 225,893 183,862", side: "318,812 337,856 246,938 225,893", shade: "#aaa", end: "183,862 225,893 246,938 205,908", endShade: "#c9c9c9", outline: "272,783 318,812 337,856 246,938 205,908 183,862 272,783" },
  { top: "215,705 243,740 130,798 103,760", side: "243,740 262,787 153,845 130,798", shade: "#bbb", end: "103,760 130,798 153,845", endShade: "#aaa", outline: "215,705 243,740 262,787 153,845 103,760 215,705" },
  { top: "187,612 197,655 77,688 60,642", side: "197,655 215,703 98,735 77,688", shade: "#c8c8c8", outline: "187,612 60,642 77,688 98,735 215,703" },
];

const DISC =
  "640,150 752,152 845,178 940,228 1012,295 1062,372 1080,455 1078,545 1060,610 1020,680 940,762 850,820 780,852 700,872 570,886 470,876 370,845 300,795 240,735 200,655 186,610 183,520 203,435 250,350 330,272 430,208 535,168";

function Blocks({ blocks }: { blocks: Block[] }) {
  return (
    <>
      {blocks.map((b) => (
        <g key={b.top} strokeLinejoin="round">
          {b.side && <polygon points={b.side} fill={b.shade} stroke="#222" strokeWidth="2" />}
          {b.end && <polygon points={b.end} fill={b.endShade} stroke="#222" strokeWidth="2" />}
          <polygon points={b.top} fill="#fff" stroke="#222" strokeWidth="2" />
          <polyline points={b.outline} fill="none" stroke="#000" strokeWidth="7" />
        </g>
      ))}
    </>
  );
}

function Viewport() {
  return (
    <main className="relative min-w-0 flex-1 overflow-hidden border-t-2 border-l-2 border-[#7b7b7b] bg-[#cececc]">
      <svg className="absolute inset-0 size-full" role="img" aria-label="모델">
        <g transform="translate(-90 -114)">
          <g shapeRendering="crispEdges">
            <path d="M103 496L604 113" stroke="#2f9b35" />
            <path d="M103 496L670 1010" stroke="#a02020" />
            <path d="M89 481L103 496" stroke="#1a1aa0" />
            <path d="M103 496L533 1010" stroke="#1c1c8a" strokeDasharray="1.5 3.5" />
            <path d="M89 506L103 496" stroke="#2f9b35" strokeDasharray="1.5 3.5" />
          </g>

          <g transform="translate(350 280) scale(0.3333)">
            <polygon
              points="1086,500 1072,600 1045,690 1020,737 945,808 915,828 845,875 800,893 735,915 675,925 590,930 550,928 435,905 340,857 262,780 200,660 500,500"
              fill="#bdbdbd"
              stroke="#000"
              strokeWidth="7"
            />
            <path d="M700 872L780 852L800 893L720 916Z" fill="#cacaca" />
            <path d="M1078 545L1060 610L1040 680L1072 600Z" fill="#7d7d7d" />
            <Blocks blocks={backBlocks} />
            <polygon points={DISC} fill="#fff" stroke="#111" strokeWidth="3" />
            <polyline
              points="240,735 200,655 186,610 183,520 203,435 250,350 330,272 430,208 535,168 640,150 752,152 845,178 940,228 1012,295 1062,372 1080,455 1078,545 1060,610"
              fill="none"
              stroke="#000"
              strokeWidth="7"
            />
            <polyline points="240,735 300,795 370,845 470,876" fill="none" stroke="#000" strokeWidth="4" />
            <polyline points="1060,610 1020,680 940,762 850,820" fill="none" stroke="#000" strokeWidth="5" />
            <Blocks blocks={frontBlocks} />
          </g>

          <g transform="translate(710 600) scale(0.3333)">
            <polygon
              points="340,69 420,70 495,92 556,125 605,172 645,238 661,300 661,372 643,440 605,498 552,548 485,583 410,601 320,601 243,576 178,538 124,480 95,420 80,348 85,283 112,215 154,160 210,112 278,82"
              fill="#b5c3cf"
              stroke="#000"
              strokeWidth="8"
            />
            <ellipse cx="422" cy="486" rx="74" ry="71" fill="none" stroke="#2020b8" strokeWidth="3" />
            <path d="M424 456L452 484L424 512L396 484Z" fill="#6f78ee" stroke="#fff" strokeWidth="8" />
            <path d="M424 462L446 484L424 506L402 484Z" fill="#6f78ee" stroke="#2c2c92" strokeWidth="5" />
            <path d="M424 482L434 462L470 426L480 436L444 472Z" fill="#c01a20" stroke="#5c0a0d" strokeWidth="3" />
            <path d="M424 482L432 464L442 474Z" fill="#ead9b0" stroke="#222" strokeWidth="2" />
            <path d="M468 428L478 418L488 422L486 432L478 438Z" fill="#b58a84" stroke="#555" strokeWidth="3" />
          </g>
        </g>
      </svg>
      <div role="tooltip" className="absolute top-[648px] left-[771px] border border-[#666] bg-[#fffff0] px-0.5 text-[16px] leading-[18px]">
        면에
      </div>
    </main>
  );
}

/* ---------- tray ---------- */

const Chevron = ({ down = false }: { down?: boolean }) => (
  <svg viewBox="0 0 10 7" className="h-[7px] w-2.5" fill="none" aria-hidden="true">
    <path d={down ? "M1 1L5 5L9 1" : "M1 6L5 2L9 6"} stroke="#555" strokeWidth="2.2" />
  </svg>
);

function ScrollColumn({ className, thumb, down = true }: { className: string; thumb: string; down?: boolean }) {
  return (
    <div className={`flex shrink-0 flex-col bg-[#f0f0f0] ${className}`}>
      <button type="button" aria-label="위로" className="flex h-[21px] shrink-0 items-center justify-center">
        <Chevron />
      </button>
      <div className={`bg-[#cdcdcd] ${thumb}`} />
      {down && (
        <button type="button" aria-label="아래로" className="mt-auto flex h-[22px] shrink-0 items-center justify-center">
          <Chevron down />
        </button>
      )}
    </div>
  );
}

function SectionHeader({ title }: { title: string }) {
  return (
    <div className="flex h-[22px] shrink-0 items-center border border-[#a8a8a8] bg-linear-to-b from-[#eaeaea] to-[#b3b3b3] pr-0.5 pl-2">
      <svg viewBox="0 0 10 9" className="mr-2 h-[9px] w-2.5" aria-hidden="true">
        <path d="M0 0H10L5 9Z" fill="#000" />
      </svg>
      <h2 className="pb-0.5 text-[16px] leading-[18px]">{title}</h2>
      <button type="button" aria-label={`${title} 닫기`} className="ml-auto flex size-4 items-center justify-center border border-[#8e8e8e] bg-[#e9e9e9]">
        <svg viewBox="0 0 8 8" className="size-[7px]" aria-hidden="true">
          <path d="M1 1L7 7M7 1L1 7" stroke="#111" strokeWidth="1.8" />
        </svg>
      </button>
    </div>
  );
}

const NavArrow = ({ flip = false }: { flip?: boolean }) => (
  <svg viewBox="0 0 16 16" className={`size-4 ${flip ? "-scale-x-100" : ""}`} fill="none" aria-hidden="true">
    <path d="M1 8L8 1V5H14V11H8V15Z" stroke="#8a8a8a" strokeWidth="1.5" />
  </svg>
);

const HomeIcon = () => (
  <svg viewBox="0 0 20 20" className="size-5" fill="none" aria-hidden="true">
    <path d="M4 9V2H6V6" stroke="#000" strokeWidth="1.5" />
    <path d="M3 10L10 3L17 10V18H3Z" fill="#fff" stroke="#000" strokeWidth="1.8" />
    <path d="M1 11L10 2L19 11" stroke="#000" strokeWidth="1.8" />
    <path d="M7 18V11H13V18Z" fill="#000" />
  </svg>
);

const DetailsIcon = () => (
  <svg viewBox="0 0 18 18" className="size-[18px]" aria-hidden="true">
    <path d="M8 0L17 9L8 18Z" fill="#000" />
    <rect x="1.5" y="4" width="9" height="10" fill="#fff" stroke="#333" />
    <rect x="2" y="4" width="8" height="4" fill="#5f97d8" />
    <path d="M3 10H9M3 12H9" stroke="#888" />
  </svg>
);

function MaterialNav({ option, focused = false }: { option: string; focused?: boolean }) {
  return (
    <div className="flex h-9 shrink-0 items-center border-b border-[#9b9b9b] pr-1 pb-[3px] pl-2">
      <button type="button" aria-label="뒤로"><NavArrow /></button>
      <button type="button" aria-label="앞으로" className="ml-3"><NavArrow flip /></button>
      <button type="button" aria-label="모델 내" className="ml-2.5"><HomeIcon /></button>
      <div className="relative mt-1 ml-1.5 h-[26px] flex-1 border-2 border-r border-b border-[#6f6f6f] border-r-[#d8d8d8] border-b-[#d8d8d8] bg-white">
        <select aria-label={`${option} 목록`} className="size-full appearance-none pl-[3px] text-[12px] leading-[22px]">
          <option>{option}</option>
        </select>
        {focused && <span className="absolute bottom-px left-1 h-px w-[125px] bg-black" />}
        <span className="pointer-events-none absolute top-0 right-0 flex h-full w-5 items-center justify-center border-r-2 border-b-2 border-[#777] bg-[#f0f0f0]">
          <svg viewBox="0 0 9 5" className="h-[5px] w-[9px]" aria-hidden="true">
            <path d="M0 0H9L4.5 5Z" fill="#000" />
          </svg>
        </span>
      </div>
      <button type="button" aria-label="세부 정보" className="ml-2"><DetailsIcon /></button>
    </div>
  );
}

const swatches = [
  "#fccfce", "#fa9c9b", "#f66967",
  "#f33638", "#ee0404", "#cc0003",
  "#9a0002", "#660002", "#fcdbce",
  "#fab39c", "#f9906a", "#f56935",
  "#f14206", "#cd3307", "#982606",
  "#661a03", "#fee6cf", "#fccf9b",
];

const FolderIcon = () => (
  <svg viewBox="0 0 35 48" className="mx-auto h-12 w-[35px]" aria-hidden="true">
    <path d="M1 5L10 2L13 6L9 46L4 40Z" fill="#8db8d8" stroke="#47606f" />
    <path d="M5 9L34 1L32 40L6 46Z" fill="#6e6255" stroke="#4a4a4a" />
    <path d="M6 11L33 4L31 42L8 46Z" fill="#b3966f" stroke="#5b5347" />
  </svg>
);

function MaterialThumb({ className }: { className: string }) {
  return (
    <svg viewBox="0 0 100 100" preserveAspectRatio="none" className={className} aria-hidden="true">
      <rect width="100" height="100" fill="#fff" />
      <path d="M0 0L100 100H0Z" fill="#a5b2bb" />
    </svg>
  );
}

function Tray() {
  return (
    <aside className="flex w-[302px] shrink-0 flex-col border-l-2 border-[#fafafa] bg-[#f1f1f1] pl-1">
      <div className="mb-px flex h-[27px] shrink-0 items-center bg-linear-to-b from-[#c2cfde] to-[#d6e3f1] pr-1 pl-1">
        <h1 className="pb-0.5 text-[15px] leading-5">기본 트레이</h1>
        <button type="button" aria-label="고정" className="mr-2 ml-auto">
          <svg viewBox="0 0 8 10" className="h-2.5 w-2" fill="none" aria-hidden="true">
            <path d="M2 6V1H6V6M0 6H8M4 6V10" stroke="#111" strokeWidth="1.4" />
            <path d="M5 1V6" stroke="#111" strokeWidth="1.5" />
          </svg>
        </button>
        <button type="button" aria-label="트레이 닫기" className="flex size-3 items-center justify-center bg-[#c25052]">
          <svg viewBox="0 0 8 8" className="size-1.5" aria-hidden="true">
            <path d="M1 1L7 7M7 1L1 7" stroke="#fff" strokeWidth="2" />
          </svg>
        </button>
      </div>
      <div className="flex min-h-0 flex-1">
        <div className="flex min-w-0 flex-1 flex-col">
          <SectionHeader title="요소 정보" />
          <section className="h-[182px] shrink-0">
            <div className="flex items-start justify-between pr-2 pl-0.5">
              <p className="w-[245px] border-b border-[#9b9b9b] px-[9px] pt-2 pb-1.5 text-[12px] leading-[17px] font-medium">선택 없음</p>
              <button type="button" aria-label="세부 정보 표시" className="mt-2">
                <svg viewBox="0 0 12 18" className="h-[18px] w-3" aria-hidden="true">
                  <rect width="12" height="18" fill="#000" />
                  <rect x="1" y="1" width="10" height="7" fill="#fff" />
                  <path d="M2 2H10L6 7Z" fill="#000" />
                  <path d="M6 10V16M3 13H9" stroke="#fff" strokeWidth="1.5" />
                </svg>
              </button>
            </div>
          </section>
          <SectionHeader title="재질" />
          <section className="flex h-[94px] shrink-0 items-start border-b border-[#9b9b9b] pt-[3px] pr-0.5 pl-0.5">
            <div className="h-[87px] w-[77px] border border-[#8f8f8f] py-[5px]">
              <MaterialThumb className="size-full border-b border-[#8f8f8f]" />
            </div>
            <input
              aria-label="재질 이름"
              defaultValue="기본값"
              disabled
              className="ml-[3px] h-[23px] w-40 border-t-2 border-l-2 border-r border-b border-[#777] border-r-white border-b-white bg-[#f1f1f1] pb-1 pl-[3px] text-[12px] leading-4 text-[#858585]"
            />
            <div className="ml-auto flex w-[26px] flex-col items-center pt-[3px]">
              <button type="button" aria-label="보조 창 표시">
                <svg viewBox="0 0 12 18" className="h-[18px] w-3" aria-hidden="true">
                  <rect width="12" height="18" fill="#000" />
                  <path d="M3 5H9" stroke="#fff" strokeWidth="2" />
                  <rect x="1" y="10" width="10" height="7" fill="#fff" />
                  <path d="M2 16H10L6 11Z" fill="#000" />
                </svg>
              </button>
              <button type="button" aria-label="재질 만들기" className="mt-[11px]">
                <svg viewBox="0 0 66 66" className="size-[22px]" aria-hidden="true">
                  <path d="M12 14L36 2L62 10V42L36 60L12 44Z" fill="#14140f" />
                  <path d="M18 14L36 6L44 9L24 18ZM32 20L50 11L58 14L40 24Z" fill="#e4e0bc" />
                  <path d="M38 34L60 20M38 46L60 32" stroke="#b9b48c" strokeWidth="3" />
                  <circle cx="19" cy="46" r="17" fill="#fff" stroke="#000" strokeWidth="4" />
                  <path d="M19 36V56M9 46H29" stroke="#000" strokeWidth="5" />
                </svg>
              </button>
              <MaterialThumb className="mt-[5px] size-[26px]" />
            </div>
          </section>
          <div role="tablist" className="flex h-[30px] shrink-0 items-end pt-[7px]">
            <button type="button" role="tab" aria-selected="true" className="h-[23px] w-[51px] border-t border-r-2 border-white border-r-[#777] pr-3 pb-1 text-center text-[12px] leading-4">
              선택
            </button>
            <button type="button" role="tab" aria-selected="false" className="h-[21px] w-[46px] border-t border-r-2 border-white border-r-[#777] pr-3.5 text-center text-[12px] leading-4">
              편집
            </button>
            <button type="button" aria-label="샘플 페인트" className="mr-[5px] mb-[5px] ml-auto">
              <svg viewBox="0 0 60 60" className="size-5" aria-hidden="true">
                <path d="M2 58L8 44L34 18L42 26L16 52Z" fill="#e8d9a8" stroke="#333" strokeWidth="4" />
                <path d="M3 57L10 46L22 36L26 42L15 52Z" fill="#d9a441" />
                <path d="M26 14L46 34M34 18L46 4C52-2 62 6 56 14L42 26Z" fill="#444" stroke="#333" strokeWidth="7" />
              </svg>
            </button>
          </div>
          <MaterialNav option="색상" />
          <div className="flex min-h-0 flex-1 overflow-hidden bg-white">
            <div className="flex flex-1 flex-wrap content-start gap-0.5 overflow-hidden pt-0.5 pr-14 pl-[3px]">
              {swatches.map((color) => (
                <button
                  key={color}
                  type="button"
                  aria-label={color}
                  className="size-[62px] border border-[#999] p-px"
                >
                  <span className="block size-full" style={{ backgroundColor: color }} />
                </button>
              ))}
            </div>
            <ScrollColumn className="w-5 border-r border-[#f8f8f8]" thumb="h-[21px]" />
          </div>
          <div className="mt-[3px] mb-1 h-0.5 shrink-0 bg-[#6d6d6d]" />
          <div className="flex h-[23px] shrink-0 items-center border-t border-b border-[#9b9b9b] bg-[#e4e4e4] pb-0.5 pl-1 text-[12px] leading-4">선택</div>
          <MaterialNav option="재질" focused />
          <div className="flex h-[33px] shrink-0 overflow-hidden bg-white">
            <div className="flex flex-1 gap-0.5 pt-0.5 pl-[3px]">
              {["폴더 1", "폴더 2", "폴더 3"].map((name) => (
                <button key={name} type="button" aria-label={name} className="flex h-[62px] w-[62px] items-end border border-[#999]">
                  <FolderIcon />
                </button>
              ))}
            </div>
            <ScrollColumn className="w-5" thumb="h-3" down={false} />
          </div>
        </div>
        <ScrollColumn className="w-[21px] border-l-2 border-[#fafafa]" thumb="h-[21px]" />
      </div>
    </aside>
  );
}

function StatusBar() {
  return (
    <footer className="flex h-[27px] shrink-0 items-center overflow-hidden border-t border-[#dcdcdc] bg-[#f1f1f1] pt-1 pl-1.5">
      <svg viewBox="0 0 20 20" className="size-[18px] shrink-0" fill="none" aria-hidden="true">
        <circle cx="10" cy="10" r="9" stroke="#9d9d9d" strokeWidth="1.5" />
        <path d="M10 16L6.5 9C5 5 8 4 10 4S15 5 13.5 9Z" fill="#9d9d9d" />
      </svg>
      <svg viewBox="0 0 20 20" className="ml-[17px] size-[18px] shrink-0" fill="none" aria-hidden="true">
        <circle cx="10" cy="10" r="9" stroke="#000" strokeWidth="1.8" />
        <circle cx="10" cy="5.5" r="1.8" fill="#000" />
        <path d="M7 8H13V11H11.5V16H8.5V11H7Z" fill="#000" />
      </svg>
      <svg viewBox="0 0 20 20" className="ml-[17px] size-[18px] shrink-0" fill="none" aria-hidden="true">
        <circle cx="10" cy="10" r="9" stroke="#9d9d9d" strokeWidth="1.5" />
        <circle cx="10" cy="7.5" r="3.5" fill="#8d8d8d" />
        <path d="M3.5 15C5 11 15 11 16.5 15C13 19 7 19 3.5 15Z" fill="#8d8d8d" />
      </svg>
      <span className="mr-[11px] mb-1 ml-3 h-[18px] w-px shrink-0 bg-[#999]" />
      <p className="text-[17px] leading-[22px] whitespace-nowrap">
        중심점을 선택하십시오. Ctrl &apos;+&apos; 또는 Ctrl &apos;-&apos;를 사용해 조각 수를 변경합니다.
      </p>
      <span className="mb-1 ml-auto h-3.5 w-px shrink-0 bg-[#888]" />
      <label htmlFor="radius" className="mr-2.5 ml-2.5 text-[16px] leading-5">반경</label>
      <input id="radius" defaultValue="473mm" className="mr-1 h-6 w-[251px] border border-b-0 border-[#abb8c4] bg-white pt-0.5 pl-0.5 text-[16px] leading-5" />
    </footer>
  );
}

export default function App() {
  return (
    <div className="flex h-screen min-h-[1000px] flex-col bg-white pt-10 pb-11 font-['Noto_Sans_CJK_KR',sans-serif] text-black">
      <nav className="flex h-6 shrink-0 items-center gap-[17px] pt-0.5 pl-[7px]">
        {menus.map((item) => (
          <a key={item} href="#" className="text-[15px] leading-5 whitespace-nowrap">
            {item}
          </a>
        ))}
      </nav>
      <TopToolbar />
      <div className="relative flex min-h-0 flex-1">
        <SideToolbar />
        <Viewport />
        <Tray />
        <div className="absolute bottom-0 left-0 h-[72px] w-[1310px] max-w-full bg-black/42" />
      </div>
      <StatusBar />
    </div>
  );
}
